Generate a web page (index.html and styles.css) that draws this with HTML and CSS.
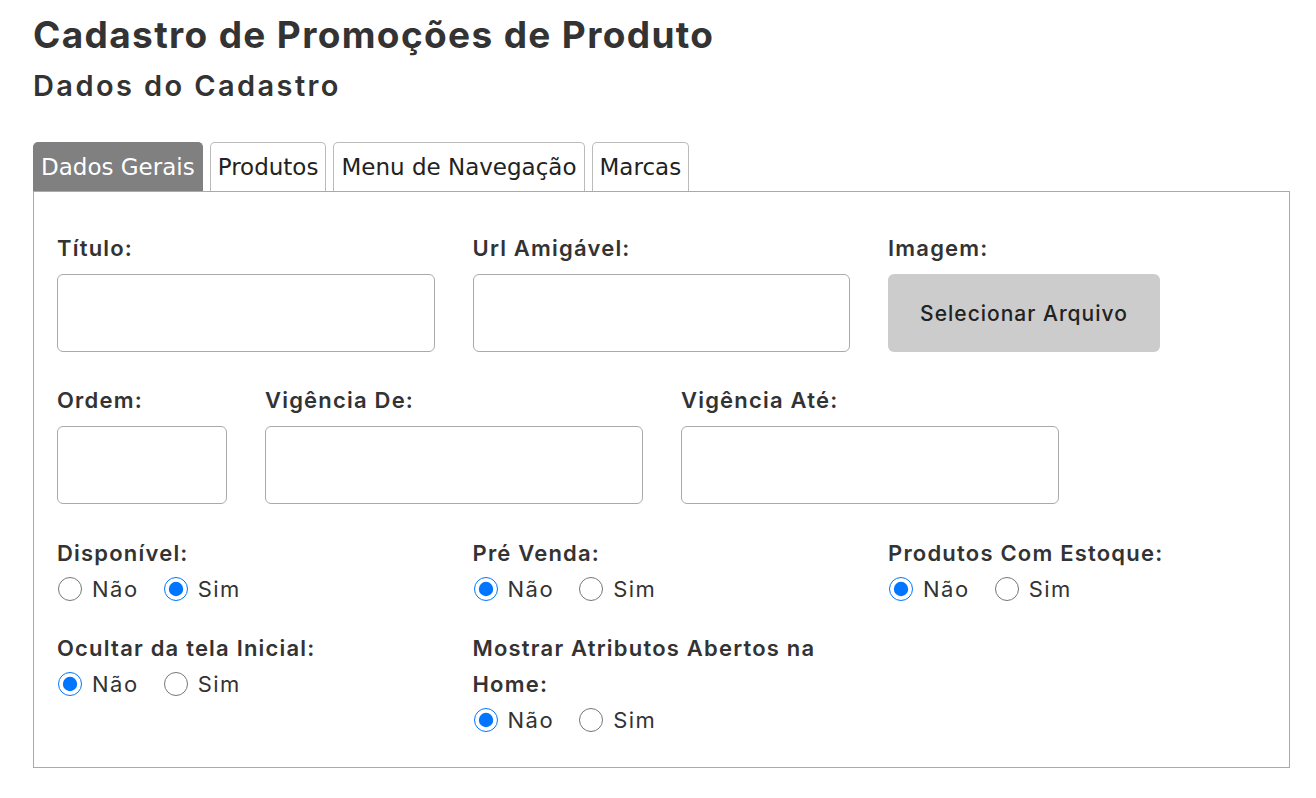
FILE: index.html
```html
<!DOCTYPE html>
<html lang="pt-BR">
<head>
<meta charset="utf-8">
<title>Cadastro de Promoções de Produto</title>
<link rel="stylesheet" href="styles.css">
</head>
<body>
<main class="page">
  <h1 class="title">Cadastro de Promoções de Produto</h1>
  <h2 class="subtitle">Dados do Cadastro</h2>

  <nav class="tabs">
    <span class="tab active">Dados Gerais</span>
    <span class="tab">Produtos</span>
    <span class="tab">Menu de Navegação</span>
    <span class="tab">Marcas</span>
  </nav>

  <section class="panel">
    <div class="row">
      <div class="field col">
        <label class="label">Título:</label>
        <input class="input" type="text">
      </div>
      <div class="field col">
        <label class="label">Url Amigável:</label>
        <input class="input" type="text">
      </div>
      <div class="field col">
        <label class="label">Imagem:</label>
        <button class="file-btn" type="button">Selecionar Arquivo</button>
      </div>
    </div>

    <div class="row row2">
      <div class="field small">
        <label class="label">Ordem:</label>
        <input class="input" type="text">
      </div>
      <div class="field col">
        <label class="label">Vigência De:</label>
        <input class="input" type="text">
      </div>
      <div class="field col">
        <label class="label">Vigência Até:</label>
        <input class="input" type="text">
      </div>
    </div>

    <div class="row row3">
      <div class="field col">
        <span class="label">Disponível:</span>
        <div class="radios">
          <label class="opt"><input type="radio" name="disp">Não</label>
          <label class="opt"><input type="radio" name="disp" checked>Sim</label>
        </div>
      </div>
      <div class="field col">
        <span class="label">Pré Venda:</span>
        <div class="radios">
          <label class="opt"><input type="radio" name="pre" checked>Não</label>
          <label class="opt"><input type="radio" name="pre">Sim</label>
        </div>
      </div>
      <div class="field col">
        <span class="label">Produtos Com Estoque:</span>
        <div class="radios">
          <label class="opt"><input type="radio" name="est" checked>Não</label>
          <label class="opt"><input type="radio" name="est">Sim</label>
        </div>
      </div>
    </div>

    <div class="row row4">
      <div class="field col">
        <span class="label">Ocultar da tela Inicial:</span>
        <div class="radios">
          <label class="opt"><input type="radio" name="ocu" checked>Não</label>
          <label class="opt"><input type="radio" name="ocu">Sim</label>
        </div>
      </div>
      <div class="field col">
        <span class="label wrap">Mostrar Atributos Abertos na Home:</span>
        <div class="radios">
          <label class="opt"><input type="radio" name="most" checked>Não</label>
          <label class="opt"><input type="radio" name="most">Sim</label>
        </div>
      </div>
    </div>
  </section>
</main>
</body>
</html>
```

FILE: styles.css
```css
* { box-sizing: border-box; }

body {
  margin: 0;
  background: #fff;
  color: #333;
  font-family: "Inter", "Noto Sans", sans-serif;
}

.page {
  padding: 14px 26px 0 33px;
}

.title {
  margin: 0;
  font-size: 37px;
  font-weight: 700;
  letter-spacing: 1.35px;
  line-height: 42px;
  color: #333;
}

.subtitle {
  margin: 12px 0 0;
  font-size: 29px;
  font-weight: 600;
  letter-spacing: 2.4px;
  line-height: 36px;
  color: #333;
}

.tabs {
  display: flex;
  gap: 7px;
  margin-top: 38px;
  height: 49px;
  align-items: stretch;
}

.tab {
  display: flex;
  align-items: center;
  padding: 0 7px;
  border: 1px solid #bbb;
  border-bottom: none;
  border-radius: 5px 5px 0 0;
  font-family: "DejaVu Sans", sans-serif;
  font-size: 23px;
  color: #222;
  background: #fff;
}

.tab.active {
  background: #808080;
  border-color: #808080;
  color: #fff;
}

.panel {
  border: 1px solid #aaa;
  padding: 38px 23px 34px 23px;
  height: 577px;
}

.row {
  display: flex;
  gap: 38px;
}

.row2 { margin-top: 30px; gap: 38.5px; }
.row3 { margin-top: 31px; }
.row4 { margin-top: 23px; }

.field {
  display: flex;
  flex-direction: column;
}

.col { width: 377.5px; }
.small { width: 169.5px; }

.label {
  font-size: 22px;
  font-weight: 600;
  letter-spacing: 1.2px;
  line-height: 36px;
  color: #333;
  margin-bottom: 8px;
}

.row3 .label, .row4 .label { margin-bottom: 0; }

.label.wrap { width: 360px; }

.input {
  height: 78px;
  width: 100%;
  border: 1px solid #aaa;
  border-radius: 6px;
  background: #fff;
}

.file-btn {
  width: 272px;
  height: 78px;
  border: none;
  border-radius: 6px;
  background: #ccc;
  color: #222;
  font-family: "Inter", "Noto Sans", sans-serif;
  font-size: 21px;
  font-weight: 500;
  letter-spacing: 1px;
}

.radios {
  display: flex;
  gap: 25px;
  height: 36px;
  align-items: center;
  padding-left: 1px;
}

.opt {
  display: flex;
  align-items: center;
  gap: 10px;
  font-size: 22px;
  letter-spacing: 1.5px;
  color: #333;
}

.opt input {
  width: 24px;
  height: 24px;
  margin: 0;
  accent-color: #0075ff;
}
```
